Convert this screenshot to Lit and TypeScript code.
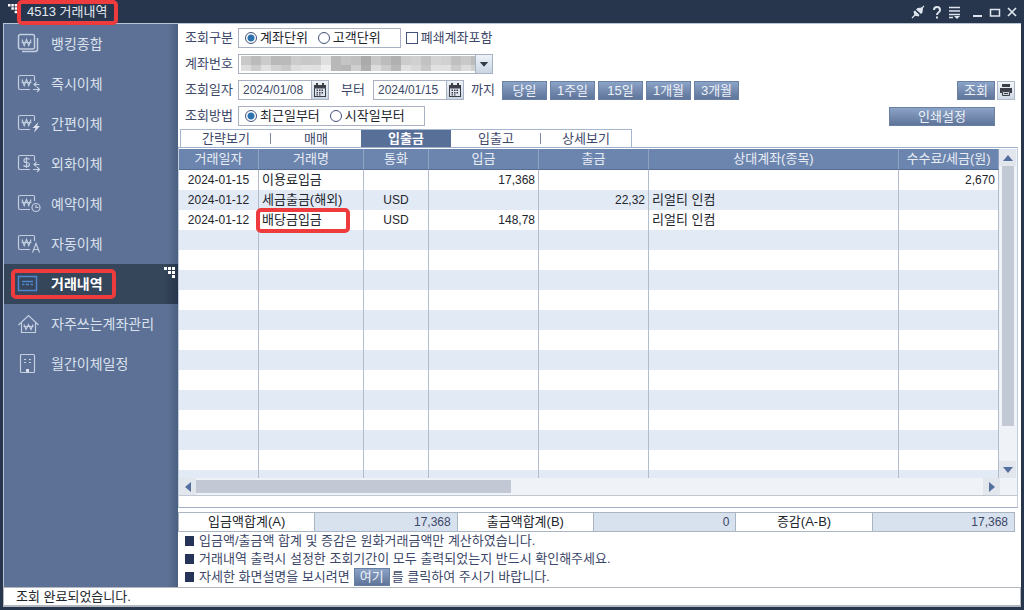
import { LitElement, html, svg, css } from "lit";
import { customElement, state } from "lit/decorators.js";
import { classMap } from "lit/directives/class-map.js";

const won = svg`<path d="M5 6.500l2.200 6 2.300-6 2.300 6 2.200-6M4.500 9.500h10" />`;
const wonCard = svg`<path d="M13 16.500H3A1.500 1.500 0 0 1 1.500 15V4A1.500 1.500 0 0 1 3 2.500H16.500Q17.500 2.500 17.500 4V8" />${won}`;
const arrows = svg`<path d="M22.500 11.500H17M19.500 9l-2.500 2.500 2.500 2M16 16.500h6.500M20 14l2.500 2.500-2.500 2.500" />`;

const icons: Record<string, unknown> = {
  bank: svg`<rect x="1.500" y="1.500" width="16" height="14.500" rx="2" stroke-width="1.500" /><path stroke-width="1.500" d="M5 18.500h13q2.500 0 2.500-2.500V5" />${won}`,
  instant: svg`${wonCard}${arrows}`,
  simple: svg`${wonCard}<path class="fill" d="M21.500 9l-6 6h3l-1.500 4.500 6-6.500h-3z" />`,
  foreign: svg`<path d="M13 16.500H3A1.500 1.500 0 0 1 1.500 15V4A1.500 1.500 0 0 1 3 2.500H16.500Q17.500 2.500 17.500 4V8" />
    <path d="M12.500 6.500q-1-1-3-1-2.500 0-2.500 2t2.500 2q3 0 3 2t-3 2q-2 0-3-1M9.500 4v11" />${arrows}`,
  reserve: svg`${wonCard}<circle cx="19" cy="14.500" r="4" /><path d="M19 12v2.500h2.500" />`,
  auto: svg`${wonCard}<path d="M15.500 19.500l3.500-9 3.500 9M16.500 16.500h5" />`,
  history: svg`<rect class="blue" x="1.500" y="3.500" width="18" height="14" /><path class="blue" d="M5 8.500h11M5 11.500h2.500M9 11.500h3M13.500 11.500h2.500" />`,
  home: svg`<path d="M1.500 12L11.500 2.500 21.500 12M4.500 10v9.500h14V10" /><path d="M7 11.500l2 5 2.500-5 2.500 5 2-5M6.500 13.500h10" />`,
  schedule: svg`<rect x="3.500" y="1.500" width="14" height="18" rx="1" /><path d="M7 6.500h2M12 6.500h2M7 9.500h2M12 9.500h2" /><path class="fill" d="M9 16h3v3h-3z" />`,
};

const nav = [
  ["bank", "뱅킹종합"],
  ["instant", "즉시이체"],
  ["simple", "간편이체"],
  ["foreign", "외화이체"],
  ["reserve", "예약이체"],
  ["auto", "자동이체"],
  ["history", "거래내역"],
  ["home", "자주쓰는계좌관리"],
  ["schedule", "월간이체일정"],
];

const columns = ["거래일자", "거래명", "통화", "입금", "출금", "상대계좌(종목)", "수수료/세금(원)"];
const records = [
  ["2024-01-15", "이용료입금", "", "17,368", "", "", "2,670"],
  ["2024-01-12", "세금출금(해외)", "USD", "", "22,32", "리얼티 인컴", ""],
  ["2024-01-12", "배당금입금", "USD", "148,78", "", "리얼티 인컴", ""],
];
const ROWS = 16;

const maskTop = "c9 bb cb b9 ba cc c8 c9 df b8 c5 c0 aa c8 bc b0 cc d0 c2 d4 d0 c0 c9 bc".split(" ");
const maskBottom = "dd cd e1 d1 c9 dd e2 e0 ee b9 b6 cf b0 dc cc b8 e0 d8 c8 e1 e0 cb dc d0".split(" ");

const steps = html`<svg class="steps" viewBox="0 0 12 12" aria-hidden="true">
  <path d="M0 0h3v3H0zM4 0h3v3H4zM8 0h3v3H8zM4 4h3v3H4zM8 4h3v3H8zM8 8h3v3H8z" />
</svg>`;

const calendar = html`<svg viewBox="0 0 14 14" width="14" height="14" aria-hidden="true">
  <path fill="#3c3f48" d="M1 2h2V0h2v2h4V0h2v2h2v12H1z" />
  <path fill="#dfe5ee" d="M2 5.500h10V13H2z" />
  <path fill="#3c3f48" d="M6 6.500h1.500V8H6zM8.500 6.500H10V8H8.500zM3.500 6.500H5V8H3.500zM3.500 9H5v1.500H3.500zM6 9h1.500v1.500H6zM8.500 9H10v1.500H8.500zM3.500 11.300H5v1.200H3.500zM6 11.300h1.500v1.200H6z" />
</svg>`;

@customElement("app-root")
export class AppRoot extends LitElement {
  @state() private tab = "입출금";
  @state() private menu = "history";

  static styles = css`
    :host {
      display: flex;
      flex-direction: column;
      height: 100vh;
      box-sizing: border-box;
      padding: 0 3px 3px;
      background: #27364c;
      color: #22252c;
      font: 13px/20px "Liberation Sans", "Noto Sans CJK KR", sans-serif;
      overflow: hidden;
    }
    *, *::before, *::after { box-sizing: border-box; }
    button, input, select { font: inherit; color: inherit; margin: 0; padding: 0; border-radius: 0; }
    button { cursor: pointer; }

    .titlebar { display: flex; align-items: center; flex: none; height: 23px; padding: 0 1px 0 5px; color: #e4e9f0; }
    .titlebar .steps { width: 10px; height: 10px; margin-bottom: 6px; }
    h1 { position: relative; margin: 0 0 0 9px; font-size: 13px; font-weight: 400; line-height: 24px; }
    .tools { display: flex; margin-left: auto; align-items: center; }
    .tool { display: flex; width: 17px; height: 20px; border: 0; background: none; justify-content: center; align-items: center; }
    .tool svg { width: 14px; height: 14px; fill: none; stroke: #dfe5ee; stroke-width: 2; }
    .gap { margin-left: 7px; }
    .link { margin-right: 2px; }

    .mark::after {
      content: "";
      position: absolute;
      border: 4px solid #ee3b3e;
      border-radius: 5px;
      pointer-events: none;
      z-index: 2;
    }
    h1.mark::after { inset: 0 -11px -1px -10px; }

    .body { display: flex; flex: 1; min-height: 0; border-left: 1px solid #b9c3d3; border-top: 1px solid #b9c3d3; background: #fff; }
    .side { flex: none; width: 174px; background: linear-gradient(to right, transparent 164px, #4b5f80), #5d7197; }
    .side a {
      position: relative;
      display: flex;
      align-items: center;
      gap: 9px;
      height: 40px;
      padding: 0 0 1px 13px;
      color: #dbe2ed;
      font-size: 14px;
      text-decoration: none;
    }
    .side a > svg:first-child { width: 25px; height: 22px; fill: none; stroke: #c3cedf; stroke-width: 1.2; }
    .side .fill { fill: #dbe2ed; stroke: none; }
    .side .blue { stroke: #4f86cf; stroke-width: 1.5; }
    .side a.active { background: linear-gradient(to right, transparent 160px, #26354a), #35455a; color: #fff; font-weight: 700; }
    .side a.mark::after { inset: 5px 62px 5px 7px; }
    .steps { fill: #fff; }
    .side .steps { position: absolute; right: 2px; top: 3px; width: 12px; height: 12px; }

    .main { display: flex; flex-direction: column; flex: 1; min-width: 0; padding: 4px 3px 1px 0; color: #3d4869; }
    .filters { display: flex; flex-direction: column; gap: 6px; padding: 0 3px 0 7px; }
    .row { display: flex; align-items: center; height: 20px; }
    .caption { flex: none; width: 53px; }
    .group { display: flex; align-items: center; gap: 10px; height: 20px; padding: 0 19px 0 6px; border: 1px solid #a9b1c2; color: #22252c; }
    .choice { display: flex; align-items: center; gap: 3px; line-height: 18px; }
    .row > .choice { margin-left: 5px; }
    .choice input { appearance: none; width: 12px; height: 12px; border: 1px solid #435079; background: #fff; }
    .choice input[type="radio"] { border-radius: 50%; }
    .choice input[type="radio"]:checked { background: radial-gradient(circle, #2b72ae 3px, #fff 4px); }
    .choice input[type="checkbox"]:checked { background: #2b72ae; }
    .account { position: relative; width: 255px; height: 20px; border: 1px solid #a9b1c2; }
    .account select { appearance: none; width: 100%; height: 100%; border: 0; background: none; }
    .mask { position: absolute; left: 2px; top: 1px; width: 235px; height: 15px; pointer-events: none; }
    .drop { position: absolute; right: 0; top: 0; width: 17px; height: 18px; border-left: 1px solid #a9b1c2; background: linear-gradient(#edf2f7, #c9d5e3); pointer-events: none; }
    .date { display: flex; width: 91px; height: 20px; border: 1px solid #a9b1c2; font-size: 12px; }
    .date input { flex: 1; min-width: 0; padding-left: 4px; border: 0; background: #fff; }
    .date button { width: 17px; border: 0; border-left: 1px solid #a9b1c2; background: linear-gradient(#edf2f7, #c9d5e3); display: flex; align-items: center; justify-content: center; }
    .from { width: 44px; padding-left: 12px; }
    .to { width: 38px; padding-left: 7px; }
    .btn { height: 19px; border: 1px solid #6a80a4; background: linear-gradient(#8ca3c8, #5e7498); color: #eef2f8; line-height: 17px; text-align: center; white-space: nowrap; }
    .periods { display: flex; gap: 3px; }
    .periods .btn { width: 45px; }
    .end { display: flex; gap: 2px; margin-left: auto; }
    .find { width: 38px; }
    .print { width: 18px; height: 19px; border: 1px solid #aebacb; background: linear-gradient(#f2f5f9, #cdd7e4); display: flex; align-items: center; justify-content: center; }
    .setup { width: 106px; margin: 0 20px 0 auto; }

    .tabs { display: flex; align-self: flex-start; height: 18px; margin: 3px 0 0 2px; border: solid #a5b7d0; border-width: 1px 1px 0; }
    .tabs button { position: relative; width: 90px; border: 0; background: none; line-height: 16px; }
    .tabs .line::after { content: ""; position: absolute; right: 0; top: 3px; height: 11px; border-right: 1px solid #7b88a3; }
    .tabs .on { background: #586f98; color: #fff; font-weight: 700; }

    .frame { display: flex; flex-direction: column; flex: 1; min-height: 0; padding-top: 1px; border: 1px solid #9fb1ca; border-left-color: #c2cddd; border-right-color: #c2cddd; }
    .sheet { display: flex; flex: 1; min-height: 0; }
    .view { flex: 1; min-width: 0; overflow: hidden; }
    .view table { width: 100%; table-layout: fixed; border-collapse: separate; border-spacing: 0; color: #22252c; }
    th { height: 21px; padding: 0; border-right: 1px solid #8fa2c2; border-bottom: 1px solid #566d94; background: #6c85ae; color: #e9eef6; font-weight: 400; line-height: 20px; }
    td { height: 20px; padding: 0 3px; border-right: 1px solid #b3bcca; line-height: 20px; white-space: nowrap; }
    tbody tr:nth-child(even) { background: #e2eaf5; }
    .c0 { width: 80px; }
    .c1 { width: 105px; }
    .c2 { width: 65px; }
    .c3, .c4 { width: 110px; }
    .c6 { width: 100px; }
    td.c0, td.c2 { text-align: center; font-size: 12px; }
    td.c3, td.c4, td.c6 { text-align: right; font-size: 12px; }
    td.mark { position: relative; }
    td.mark::after { inset: -2px 13px -3px -3px; }

    .vbar { display: flex; flex-direction: column; flex: none; width: 18px; background: #eff2f7; }
    .hbar { display: flex; flex: none; height: 18px; padding-right: 17px; border-bottom: 1px solid #c3c9d2; background: #eff2f7; }
    .arrow { flex: none; display: flex; align-items: center; justify-content: center; width: 17px; height: 17px; border: 0; background: #e2e6ed; }
    .arrow svg { width: 10px; height: 10px; fill: #54709f; }
    .track { flex: 1; }
    .vbar .thumb { height: 88%; margin: 0 3px; background: #c3c8d5; }
    .hbar .thumb { width: 40%; height: 13px; margin: 2px 0; background: #c3c8d5; }
    .foot { flex: none; height: 11px; }

    .sums { display: flex; flex: none; margin: 4px 3px 0 0; border: 1px solid #aab5c4; }
    .sums div { display: flex; flex: 1; }
    .sums div + div { border-left: 1px solid #aab5c4; }
    .sums dt, .sums dd { flex: 1; margin: 0; line-height: 18px; }
    .sums dt { color: #22252c; text-align: center; }
    .sums dd { padding-right: 6px; border-left: 1px solid #aab5c4; background: #d8e1ee; font-size: 12px; text-align: right; }
    .notes { flex: none; margin: 0; padding: 0 0 0 7px; list-style: none; }
    .notes li { display: flex; align-items: center; height: 18px; line-height: 18px; }
    .notes li::before { content: ""; width: 9px; height: 10px; margin-right: 5px; background: #27345a; }
    .notes .btn { width: 36px; height: 18px; margin: 0 2px 0 4px; line-height: 16px; }
    .status { flex: none; height: 20px; padding-left: 12px; border: solid #b4b8be; border-width: 1px 1px 2px; background: #fff; line-height: 17px; }
  `;

  private arrow(label: string, d: string) {
    return html`<button class="arrow" aria-label=${label}><svg viewBox="0 0 10 10"><path d=${d} /></svg></button>`;
  }

  private radio(name: string, text: string, checked: boolean) {
    return html`<label class="choice"><input type="radio" name=${name} .checked=${checked} />${text}</label>`;
  }

  private date(label: string, value: string) {
    return html`<div class="date">
      <input type="text" aria-label=${label} .value=${value} /><button aria-label="달력">${calendar}</button>
    </div>`;
  }

  private sidebar() {
    return html`<nav class="side">
      ${nav.map(([id, text]) => {
        const active = id === this.menu;
        return html`<a href="#${id}" class=${classMap({ active, mark: active })} @click=${() => (this.menu = id)}>
          <svg viewBox="0 0 25 22" aria-hidden="true">${icons[id]}</svg>${text}${active ? steps : ""}
        </a>`;
      })}
    </nav>`;
  }

  private filters() {
    return html`<div class="filters">
      <div class="row">
        <span class="caption">조회구분</span>
        <div class="group" role="radiogroup" aria-label="조회구분">
          ${this.radio("unit", "계좌단위", true)}${this.radio("unit", "고객단위", false)}
        </div>
        <label class="choice"><input type="checkbox" />폐쇄계좌포함</label>
      </div>
      <div class="row">
        <label class="caption" for="account">계좌번호</label>
        <div class="account">
          <select id="account"><option></option></select>
          <svg class="mask" viewBox="0 0 235 15" aria-hidden="true">
            ${maskTop.map((c, i) => svg`<rect x=${i * 10} width="10" height="9" fill=${"#" + c + c + c} />`)}
            ${maskBottom.map((c, i) => svg`<rect x=${i * 10} y="9" width="10" height="6" fill=${"#" + c + c + c} />`)}
          </svg>
          <svg class="drop" viewBox="0 0 17 18" aria-hidden="true"><path fill="#333b49" d="M4 7h9l-4.500 5z" /></svg>
        </div>
      </div>
      <div class="row">
        <span class="caption">조회일자</span>
        ${this.date("시작일", "2024/01/08")}<span class="from">부터</span>
        ${this.date("종료일", "2024/01/15")}<span class="to">까지</span>
        <div class="periods">
          ${["당일", "1주일", "15일", "1개월", "3개월"].map((p) => html`<button class="btn">${p}</button>`)}
        </div>
        <div class="end">
          <button class="btn find">조회</button>
          <button class="print" aria-label="인쇄">
            <svg viewBox="0 0 14 14" width="14" height="14">
              <path fill="#3c3f48" d="M3 1h8v3H3zM1 5h12v5h-2V8H3v2H1z" />
              <path fill="#c9cfd8" stroke="#3c3f48" d="M3.500 8.500h7v4h-7zM5 10.500h4" />
            </svg>
          </button>
        </div>
      </div>
      <div class="row">
        <span class="caption">조회방법</span>
        <div class="group" role="radiogroup" aria-label="조회방법">
          ${this.radio("order", "최근일부터", true)}${this.radio("order", "시작일부터", false)}
        </div>
        <button class="btn setup">인쇄설정</button>
      </div>
    </div>`;
  }

  private sheet() {
    const rows = Array.from({ length: ROWS }, (_, i) => records[i] ?? columns.map(() => ""));
    return html`<div class="frame">
      <div class="sheet">
        <div class="view">
          <table>
            <thead><tr>${columns.map((c, i) => html`<th class="c${i}">${c}</th>`)}</tr></thead>
            <tbody>
              ${rows.map((r) => html`<tr>
                ${r.map((v, i) => html`<td class="c${i} ${v === "배당금입금" ? "mark" : ""}">${v}</td>`)}
              </tr>`)}
            </tbody>
          </table>
        </div>
        <div class="vbar">
          ${this.arrow("위로", "M0 8h10L5 2z")}
          <div class="track"><div class="thumb"></div></div>
          ${this.arrow("아래로", "M0 2h10L5 8z")}
        </div>
      </div>
      <div class="hbar">
        ${this.arrow("왼쪽으로", "M8 0v10L2 5z")}
        <div class="track"><div class="thumb"></div></div>
        ${this.arrow("오른쪽으로", "M2 0v10l6-5z")}
      </div>
      <div class="foot"></div>
    </div>`;
  }

  render() {
    const tabs = ["간략보기", "매매", "입출금", "입출고", "상세보기"];
    return html`
      <header class="titlebar">
        ${steps}
        <h1 class="mark">4513 거래내역</h1>
        <div class="tools">
          <button class="tool link" aria-label="연결">
            <svg viewBox="0 0 14 14"><path stroke-width="1.200" d="M1 13l3.500-3.500M10 4l3-3" /><path fill="#dfe5ee" stroke="none" d="M2.500 6.500l1.500-1 4.500 4.500-1 1.500-4-1zM5 4.500L6.500 3 11 2.500l1 .5-.5 4.500L10 9z" /></svg>
          </button>
          <button class="tool" aria-label="도움말">
            <svg viewBox="0 0 14 14"><path d="M4 5q0-3 3-3t3 3q0 1.500-1.500 2.500T7 10M7 11.500v2" /></svg>
          </button>
          <button class="tool" aria-label="메뉴">
            <svg viewBox="0 0 14 14"><path stroke-width="1.500" d="M2 2.500h11M2 6h11M2 9.500h11M2 12.500h4" /><path fill="#dfe5ee" stroke="none" d="M7 11h6l-3 3z" /></svg>
          </button>
          <button class="tool gap" aria-label="최소화">
            <svg viewBox="0 0 14 14"><path d="M2 11h9" /></svg>
          </button>
          <button class="tool" aria-label="최대화">
            <svg viewBox="0 0 14 14"><path stroke-width="1.500" d="M2.500 4.500h9v6.500h-9z" /></svg>
          </button>
          <button class="tool" aria-label="닫기">
            <svg viewBox="0 0 14 14"><path stroke-width="1.700" d="M3 3l8 8M11 3l-8 8" /></svg>
          </button>
        </div>
      </header>
      <div class="body">
        ${this.sidebar()}
        <main class="main">
          ${this.filters()}
          <div class="tabs" role="tablist">
            ${tabs.map((t, i) => html`<button role="tab" aria-selected=${t === this.tab ? "true" : "false"}
              class=${classMap({ on: t === this.tab, line: i === 0 || i === 3 })}
              @click=${() => (this.tab = t)}>${t}</button>`)}
          </div>
          ${this.sheet()}
          <dl class="sums">
            <div><dt>입금액합계(A)</dt><dd>17,368</dd></div>
            <div><dt>출금액합계(B)</dt><dd>0</dd></div>
            <div><dt>증감(A-B)</dt><dd>17,368</dd></div>
          </dl>
          <ul class="notes">
            <li>입금액/출금액 합계 및 증감은 원화거래금액만 계산하였습니다.</li>
            <li>거래내역 출력시 설정한 조회기간이 모두 출력되었는지 반드시 확인해주세요.</li>
            <li>자세한 화면설명을 보시려면<button class="btn">여기</button>를 클릭하여 주시기 바랍니다.</li>
          </ul>
        </main>
      </div>
      <footer class="status" role="status">조회 완료되었습니다.</footer>
    `;
  }
}
